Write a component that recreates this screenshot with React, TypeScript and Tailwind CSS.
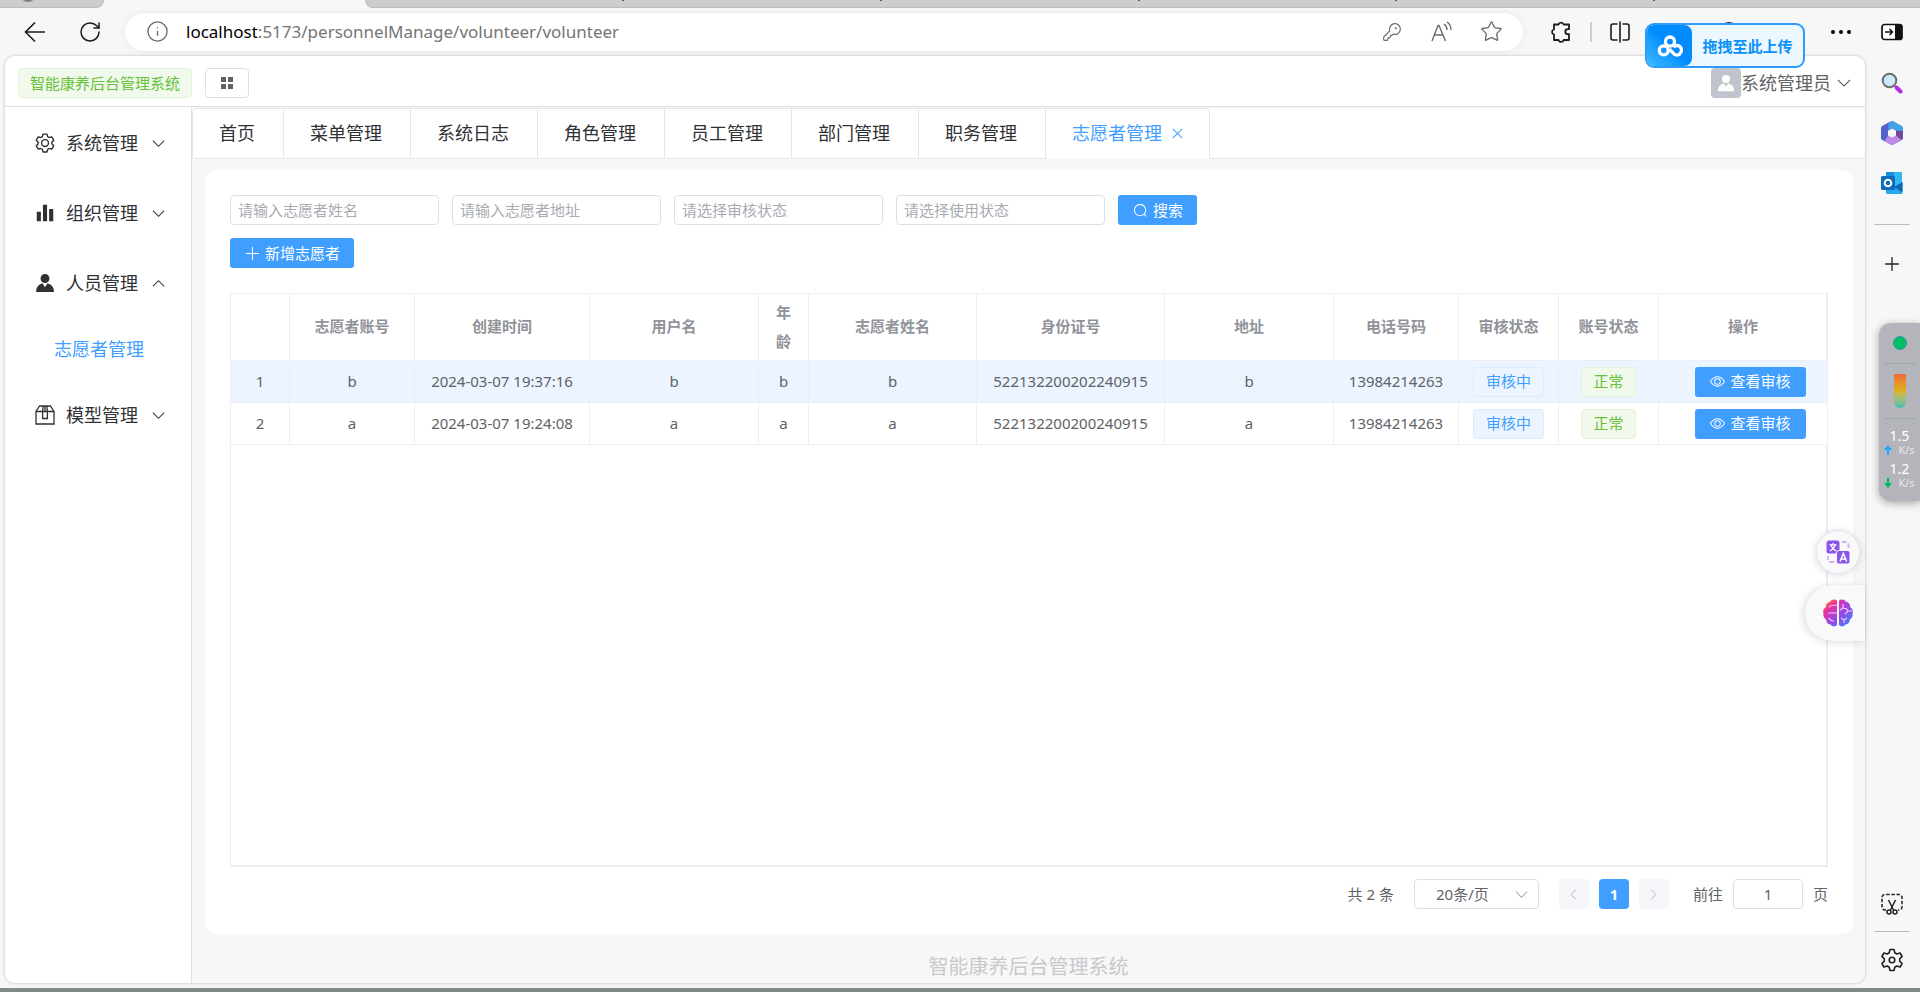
import React from "react";
import { Info, KeyRound, Star, Plus, RotateCw } from "lucide-react";

const CJK = "font-['Noto_Sans','Noto_Sans_CJK_SC',sans-serif]";

function ElIcon({ d, className }: { d: string; className: string }) {
  return (
    <svg viewBox="0 0 1024 1024" fill="currentColor" className={className} aria-hidden="true">
      <path d={d} />
    </svg>
  );
}

const SETTING =
  "M600.704 64a32 32 0 0 1 30.464 22.208l35.2 109.376c14.784 7.232 28.928 15.36 42.432 24.512l112.384-24.192a32 32 0 0 1 34.432 15.36L944.32 364.8a32 32 0 0 1-4.032 37.504l-77.12 85.12a357.12 357.12 0 0 1 0 49.024l77.12 85.248a32 32 0 0 1 4.032 37.504l-88.704 153.6a32 32 0 0 1-34.432 15.296L708.8 803.904c-13.44 9.088-27.648 17.28-42.368 24.512l-35.264 109.376A32 32 0 0 1 600.704 960H423.296a32 32 0 0 1-30.464-22.208L357.696 828.48a351.616 351.616 0 0 1-42.56-24.64l-112.32 24.256a32 32 0 0 1-34.432-15.36L79.68 659.2a32 32 0 0 1 4.032-37.504l77.12-85.248a357.12 357.12 0 0 1 0-48.896l-77.12-85.248A32 32 0 0 1 79.68 364.8l88.704-153.6a32 32 0 0 1 34.432-15.296l112.32 24.256c13.568-9.152 27.776-17.408 42.56-24.64l35.2-109.312A32 32 0 0 1 423.232 64H600.64zm-23.424 64H446.72l-36.352 113.088-24.512 11.968a294.113 294.113 0 0 0-34.816 20.096l-22.656 15.36-116.224-25.088-65.28 113.152 79.68 88.192-1.92 27.136a293.12 293.12 0 0 0 0 40.192l1.92 27.136-79.808 88.192 65.344 113.152 116.224-25.024 22.656 15.296a294.113 294.113 0 0 0 34.816 20.096l24.512 11.968L446.72 896h130.688l36.48-113.152 24.448-11.904a288.282 288.282 0 0 0 34.752-20.096l22.592-15.296 116.288 25.024 65.28-113.152-79.744-88.192 1.92-27.136a293.12 293.12 0 0 0 0-40.256l-1.92-27.136 79.808-88.128-65.344-113.152-116.288 24.96-22.592-15.232a287.616 287.616 0 0 0-34.752-20.096l-24.448-11.904L577.344 128zM512 320a192 192 0 1 1 0 384 192 192 0 0 1 0-384zm0 64a128 128 0 1 0 0 256 128 128 0 0 0 0-256z";
const HISTOGRAM = "M416 896V128h192v768H416zm-288 0V448h192v448H128zm576 0V320h192v576H704z";
const AVATAR =
  "M628.736 528.896A416 416 0 0 1 928 928H96a415.872 415.872 0 0 1 299.264-399.104L512 704l116.736-175.104zM720 304a208 208 0 1 1-416 0 208 208 0 0 1 416 0z";
const SEARCH =
  "m795.904 750.72 124.992 124.928a32 32 0 0 1-45.248 45.248L750.656 795.904a416 416 0 1 1 45.248-45.248zM480 832a352 352 0 1 0 0-704 352 352 0 0 0 0 704z";
const VIEW =
  "M512 160c320 0 512 352 512 352S832 864 512 864 0 512 0 512s192-352 512-352zm0 64c-225.28 0-384.128 208.064-436.8 288 52.608 79.872 211.456 288 436.8 288 225.28 0 384.128-208.064 436.8-288-52.608-79.872-211.456-288-436.8-288zm0 64a224 224 0 1 1 0 448 224 224 0 0 1 0-448zm0 64a160.192 160.192 0 0 0-160 160c0 88.192 71.744 160 160 160s160-71.808 160-160-71.744-160-160-160z";

function Line({ points, className }: { points: string; className: string }) {
  return (
    <svg viewBox="0 0 16 16" fill="none" stroke="currentColor" strokeWidth="1.1" className={className} aria-hidden="true">
      <path d={points} />
    </svg>
  );
}
const DOWN = "M2 5l6 6 6-6";
const UP = "M2 11l6-6 6 6";
const LEFT = "M11 2L5 8l6 6";
const RIGHT = "M5 2l6 6-6 6";
const CROSS = "M3 3l10 10M13 3L3 13";
const ADD = "M8 1v14M1 8h14";

function BoxIcon() {
  return (
    <svg viewBox="0 0 20 20" fill="none" stroke="currentColor" strokeWidth="1.3" className="size-5" aria-hidden="true">
      <path d="M1 6.5h18V19H1zM1 6.5L4.5 1h11L19 6.5M8.2 1L7.6 6.5v7h4.8v-7L11.8 1M10 1v5" />
    </svg>
  );
}

function BrowserBar() {
  return (
    <>
      <div className="flex h-2 items-start justify-between" aria-hidden="true">
        <div className="h-full w-[104px] overflow-hidden rounded-br-lg border-r border-b border-[#bdbdbd] bg-[#cdcdcd] pl-5">
          <div className="-mt-[14px] size-4 rounded-full bg-[#8b7f7d]" />
        </div>
        <div className="ml-[261px] flex h-full flex-1 justify-between rounded-bl-lg border-b border-l border-[#bdbdbd] bg-[#cdcdcd] pr-[265px] pl-[256px]">
          <i className="h-px w-0.5 bg-[#555]" />
          <i className="h-px w-0.5 bg-[#555]" />
          <i className="h-px w-0.5 bg-[#555]" />
          <i className="h-px w-0.5 bg-[#555]" />
          <i className="h-px w-0.5 bg-[#555]" />
        </div>
      </div>
      <div className="flex h-[47px] items-center pl-6 text-[#1b1b1b]">
        <button aria-label="后退">
          <svg viewBox="0 0 22 22" fill="none" stroke="currentColor" strokeWidth="1.6" className="size-[22px]">
            <path d="M21 11H1.500M11 1.500L1.500 11l9.500 9.500" />
          </svg>
        </button>
        <button aria-label="刷新" className="ml-8"><RotateCw className="size-6" strokeWidth={1.5} /></button>
        <div className="ml-[23px] flex h-[38px] flex-1 items-center rounded-full bg-white pr-5 pl-[21px] shadow-[0_0_5px_rgba(0,0,0,0.08)]">
          <Info className="size-[23px] text-[#6b6b6b]" strokeWidth={1.4} />
          <a
            href="#address"
            className="block flex-1 pl-[17px] font-['Noto_Sans',sans-serif] text-[17px] leading-6 text-[#757575]"
          >
            <span className="text-black">localhost</span>:5173/personnelManage/volunteer/volunteer
          </a>
          <div className="flex items-center gap-[26px] text-[#6b6b6b]">
            <button aria-label="密码"><KeyRound className="size-5" strokeWidth={1.4} /></button>
            <button aria-label="朗读" className="w-[26px]">
              <svg viewBox="0 0 26 24" fill="none" stroke="currentColor" strokeWidth="1.4" className="h-6 w-[26px]">
                <path d="M4 21L10 5.500h1L17.500 21M6.300 15h9M16 4c2 1.500 3 3.500 3 6M19 2c3 2 4 5 4 8" />
              </svg>
            </button>
            <button aria-label="收藏"><Star className="size-[23px]" strokeWidth={1.4} /></button>
          </div>
        </div>
        <div className="flex w-[397px] items-center">
          <button aria-label="扩展" className="ml-[26px]">
            <svg viewBox="0 0 24 24" fill="none" stroke="currentColor" strokeWidth="1.8" strokeLinejoin="round" className="size-6">
              <path d="M5 4.500h4.500a2.700 2.700 0 0 1 5.200 0H20v4.700h-1.200a2.500 2.500 0 0 0 0 5H20V20h-5.300a2.700 2.700 0 0 1-5.200 0H5v-5.300a2.700 2.700 0 0 1 0-5.200z" />
            </svg>
          </button>
          <span className="ml-[17px] h-5 w-0.5 bg-[#cfcfcf]" />
          <button aria-label="分屏" className="ml-[17px]">
            <svg viewBox="0 0 22 22" fill="none" stroke="currentColor" strokeWidth="1.6" className="size-[22px]">
              <path d="M8.500 3H4a2 2 0 0 0-2 2v12a2 2 0 0 0 2 2h4.500M13.500 3H18a2 2 0 0 1 2 2v12a2 2 0 0 1-2 2h-4.500M11 .5v21" />
            </svg>
          </button>
          <span className="ml-[88px] size-5 rounded-full border-2 border-[#222]" />
          <button aria-label="更多" className="ml-[92px] flex gap-1">
            <i className="size-[4px] rounded-full bg-black" />
            <i className="size-[4px] rounded-full bg-black" />
            <i className="size-[4px] rounded-full bg-black" />
          </button>
          <button aria-label="侧栏" className="mr-[17px] ml-auto">
            <svg viewBox="0 0 22 18" className="h-[18px] w-[22px]">
              <rect x="1" y="1.500" width="20" height="15" rx="2.500" fill="#fff" stroke="#111" strokeWidth="1.700" />
              <path d="M14 1.500h5a2 2 0 0 1 2 2v11a2 2 0 0 1-2 2h-5z" fill="#111" />
              <path d="M4 9h7M8.500 6l3 3-3 3" fill="none" stroke="#111" strokeWidth="1.500" />
            </svg>
          </button>
        </div>
      </div>
    </>
  );
}

function UploadBadge() {
  return (
    <div className="absolute top-[23px] right-[115px] flex h-[45px] w-[160px] items-center overflow-hidden rounded-[9px] border-2 border-[#2c9bfb] bg-[#ecf7ff]">
      <div className="flex h-full w-[45px] items-center justify-center rounded-r-[8px] bg-gradient-to-tr from-[#3bbcff] to-[#008cff] to-50%">
        <svg viewBox="0 0 28 24" fill="none" stroke="#fff" strokeWidth="3.6" className="h-[22px] w-[26px]">
          <circle cx="14" cy="7.200" r="5" />
          <circle cx="7.200" cy="16.700" r="4.900" />
          <path d="M10.500 13.500M25 20.500a4.900 4.900 0 0 1-7.200-.4L13.500 15.500M17.800 13.300a4.900 4.900 0 1 1 7 6.800" />
        </svg>
      </div>
      <span className="flex-1 pt-px text-center text-[15px] font-bold text-[#0a91fb]">拖拽至此上传</span>
    </div>
  );
}

const menus = [
  { label: "系统管理", icon: <ElIcon d={SETTING} className="size-[22px]" />, arrow: DOWN },
  { label: "组织管理", icon: <ElIcon d={HISTOGRAM} className="size-[22px]" />, arrow: DOWN },
  { label: "人员管理", icon: <ElIcon d={AVATAR} className="size-[22px]" />, arrow: UP, child: "志愿者管理" },
  { label: "模型管理", icon: <BoxIcon />, arrow: DOWN },
];

function Sidebar() {
  return (
    <nav className="w-[187px] shrink-0 border-r border-[#dcdfe6] bg-white pt-px text-[18px] text-[#303133]">
      {menus.map((m) => (
        <div key={m.label}>
          <button className="flex h-[70px] w-full items-center pl-[29px]">
            <span className="flex w-[22px] justify-center">{m.icon}</span>
            <span className="ml-[10px]">{m.label}</span>
            <Line points={m.arrow} className="ml-[13px] size-[15px]" />
          </button>
          {m.child && (
            <a href="#volunteer" className="flex h-[62px] items-center pl-[49px] text-[#409eff]">
              {m.child}
            </a>
          )}
        </div>
      ))}
    </nav>
  );
}

const tabs = ["首页", "菜单管理", "系统日志", "角色管理", "员工管理", "部门管理", "职务管理"];

function Tabs() {
  return (
    <div className="mt-px flex h-[51px] bg-white text-[18px] text-[#303133]">
      {tabs.map((t) => (
        <button
          key={t}
          className="border-t border-r border-b border-[#e4e7ed] pr-[28px] pl-[26px] first:rounded-tl first:border-l"
        >
          {t}
        </button>
      ))}
      <div className="flex items-center rounded-tr border-t border-r border-b border-[#e4e7ed] border-b-white pr-[24px] pl-[26px] text-[#409eff]">
        <button>志愿者管理</button>
        <button aria-label="关闭" className="ml-2">
          <Line points={CROSS} className="size-[15px]" />
        </button>
      </div>
      <div className="flex-1 border-b border-[#e4e7ed]" />
    </div>
  );
}

const cols = [
  { label: "", w: "w-[59px]" },
  { label: "志愿者账号", w: "w-[125px]" },
  { label: "创建时间", w: "w-[175px]" },
  { label: "用户名", w: "w-[169px]" },
  { label: "年龄", w: "w-[50px]" },
  { label: "志愿者姓名", w: "w-[168px]" },
  { label: "身份证号", w: "w-[188px]" },
  { label: "地址", w: "w-[169px]" },
  { label: "电话号码", w: "w-[125px]" },
  { label: "审核状态", w: "w-[100px]" },
  { label: "账号状态", w: "w-[100px]" },
  { label: "操作", w: "w-[168px]" },
];

const rows = [
  ["1", "b", "2024-03-07 19:37:16", "b", "b", "b", "522132200202240915", "b", "13984214263"],
  ["2", "a", "2024-03-07 19:24:08", "a", "a", "a", "522132200200240915", "a", "13984214263"],
];

const field =
  "h-[30px] w-[209px] appearance-none rounded border border-[#dcdfe6] bg-white px-[7px] text-[15px] text-[#a8abb2] outline-none placeholder:text-[#a8abb2]";

function VolunteerCard() {
  return (
    <section className="mr-3 ml-[13px] mt-[11px] flex flex-1 flex-col rounded-[12px] bg-white px-[25px] pt-[25px] pb-[25px] text-[15px]">
      <form className="flex flex-wrap gap-[13px]" onSubmit={(e) => e.preventDefault()}>
        <input aria-label="志愿者姓名" placeholder="请输入志愿者姓名" className={field} />
        <input aria-label="志愿者地址" placeholder="请输入志愿者地址" className={field} />
        <select aria-label="审核状态" className={field}>
          <option>请选择审核状态</option>
        </select>
        <select aria-label="使用状态" className={field}>
          <option>请选择使用状态</option>
        </select>
        <button className="flex h-[30px] items-center gap-[5px] rounded-[3px] bg-[#409eff] pr-[14px] pl-[15px] text-white">
          <ElIcon d={SEARCH} className="size-[15px]" />
          搜索
        </button>
      </form>
      <div className="mt-[13px]">
        <button className="flex h-[30px] items-center gap-[5px] rounded-[3px] bg-[#409eff] pr-[14px] pl-[15px] text-white">
          <Line points={ADD} className="size-[15px]" />
          新增志愿者
        </button>
      </div>
      <div className="mt-[25px] flex-1 border-t border-r-2 border-b-2 border-l border-[#ebeef5]">
        <table className="w-full table-fixed border-separate border-spacing-0 text-center">
          <thead>
            <tr>
              {cols.map((c) => (
                <th
                  key={c.label}
                  className={`${c.w} h-[67px] border-r border-b border-[#ebeef5] px-[12px] pt-0 pb-px leading-[29px] font-bold text-[#909399] last:border-r-0`}
                >
                  {c.label}
                </th>
              ))}
            </tr>
          </thead>
          <tbody className="text-[#606266]">
            {rows.map((r, i) => (
              <tr key={r[0]} className={i === 0 ? "bg-[#ecf5ff]" : "bg-white"}>
                {r.map((v, j) => (
                  <td key={j} className="h-[42px] border-r border-b border-[#ebeef5] p-0">
                    {v}
                  </td>
                ))}
                <td className="h-[42px] border-r border-b border-[#ebeef5] p-0">
                  <span className="inline-flex h-[30px] items-center rounded border border-[#d9ecff] bg-[#ecf5ff] px-[12px] align-middle text-[#409eff]">
                    审核中
                  </span>
                </td>
                <td className="h-[42px] border-r border-b border-[#ebeef5] p-0">
                  <span className="inline-flex h-[30px] items-center rounded border border-[#e1f3d8] bg-[#f0f9eb] px-[11px] align-middle text-[#67c23a]">
                    正常
                  </span>
                </td>
                <td className="h-[42px] border-b border-[#ebeef5] py-0 pr-0 pl-[15px]">
                  <button className="inline-flex h-[30px] items-center gap-[5px] rounded-[3px] bg-[#409eff] px-[15px] align-middle text-white">
                    <ElIcon d={VIEW} className="size-[15px]" />
                    查看审核
                  </button>
                </td>
              </tr>
            ))}
          </tbody>
        </table>
      </div>
      <div className="mt-[12px] flex h-[30px] items-center justify-end text-[#606266]">
        <span>共 2 条</span>
        <div className="relative ml-5">
          <select
            aria-label="每页条数"
            className="h-[30px] w-[125px] appearance-none rounded border border-[#dcdfe6] bg-white pl-[21px] outline-none"
          >
            <option>20条/页</option>
          </select>
          <Line points={DOWN} className="pointer-events-none absolute top-2 right-2.5 size-[15px] text-[#a8abb2]" />
        </div>
        <div className="ml-5 flex gap-[10px]">
          <button aria-label="上一页" className="flex size-[30px] items-center justify-center rounded-sm bg-[#f5f7fa] text-[#a8abb2]">
            <Line points={LEFT} className="size-[13px]" />
          </button>
          <button className="size-[30px] rounded-sm bg-[#409eff] font-bold text-white">1</button>
          <button aria-label="下一页" className="flex size-[30px] items-center justify-center rounded-sm bg-[#f5f7fa] text-[#a8abb2]">
            <Line points={RIGHT} className="size-[13px]" />
          </button>
        </div>
        <label className="ml-6 flex items-center">
          前往
          <input
            defaultValue="1"
            className="mx-[10px] h-[30px] w-[70px] rounded border border-[#dcdfe6] bg-white text-center outline-none"
          />
          页
        </label>
      </div>
    </section>
  );
}

function AppFrame() {
  return (
    <div className="mb-1 ml-1 flex flex-1 flex-col overflow-hidden rounded-[11px] border border-[#dedede] bg-white shadow-[0_0_3px_rgba(0,0,0,0.1)]">
      <header className="flex h-[51px] items-center border-b border-[#dcdfe6] pt-1 pr-[13px] pl-[13px]">
        <h1 className="flex h-[30px] items-center rounded border border-[#e1f3d8] bg-[#f0f9eb] px-[11px] text-[15px] text-[#67c23a]">
          智能康养后台管理系统
        </h1>
        <button aria-label="菜单" className="ml-[13px] flex h-[30px] w-11 items-center justify-center rounded border border-[#dcdfe6] text-[#606266]">
          <svg viewBox="0 0 12 12" fill="currentColor" className="size-3">
            <rect width="5" height="5" />
            <rect x="7" width="5" height="5" />
            <rect y="7" width="5" height="5" />
            <rect x="7" y="7" width="5" height="5" />
          </svg>
        </button>
        <button className="ml-auto flex items-center text-[18px] text-[#606266]">
          <span className="flex size-[30px] items-center justify-center rounded bg-[#c0c4cc] text-white">
            <ElIcon d={AVATAR} className="size-5" />
          </span>
          系统管理员
          <Line points={DOWN} className="ml-[5px] size-4" />
        </button>
      </header>
      <div className="flex flex-1">
        <Sidebar />
        <main className="flex min-w-0 flex-1 flex-col bg-[#f7f7f7]">
          <Tabs />
          <VolunteerCard />
          <footer className="flex h-[49px] items-center justify-center pt-4 text-[20px] text-[#c8c9cc]">
            智能康养后台管理系统
          </footer>
        </main>
      </div>
    </div>
  );
}

function Rail() {
  return (
    <aside className="flex w-[54px] shrink-0 flex-col items-center pr-0.5 pb-4 text-[#222]">
      <button aria-label="搜索" className="mt-[17px]">
        <svg viewBox="0 0 22 22" className="size-[22px]">
          <path d="M14 14l2.500 2.500" stroke="#777" strokeWidth="2" />
          <path d="M15.500 15.500l4 4" stroke="#b52be8" strokeWidth="4" strokeLinecap="round" />
          <circle cx="8.500" cy="8.500" r="6.800" fill="#cfe9fb" stroke="#6d7073" strokeWidth="2" />
        </svg>
      </button>
      <button aria-label="Microsoft 365" className="mt-[27px]">
        <svg viewBox="0 0 22 24" className="h-6 w-[22px]">
          <path d="M9.500.6a3 3 0 0 1 3 0L20.500 5A3 3 0 0 1 22 7.600v8.800a3 3 0 0 1-1.500 2.600l-8 4.500a3 3 0 0 1-3 0L1.500 19A3 3 0 0 1 0 16.400V7.600A3 3 0 0 1 1.500 5z" fill="#4c6fd6" />
          <path d="M11 .2c.6 0 1 .1 1.500.4L20.500 5A3 3 0 0 1 22 7.600V14l-7-4.200-4-2.300-3.500 1V3.500z" fill="#3fa3e6" />
          <path d="M22 10v6.400a3 3 0 0 1-1.500 2.600l-5 2.800-.5-7.400V9.800z" fill="#74489c" />
          <path d="M20.500 19l-8 4.500a3 3 0 0 1-3 0L3.500 20 7 14.400l4 2.300 4-2.300z" fill="#c08be8" />
          <path d="M0 12V7.600A3 3 0 0 1 1.500 5L7 2v12.400L3.500 20l-2-1A3 3 0 0 1 0 16.400z" fill="#5663cf" />
          <path d="M11 7.500l4 2.300v4.600l-4 2.300-4-2.300V9.800z" fill="#f7f7f7" />
        </svg>
      </button>
      <button aria-label="Outlook" className="mt-[26px]">
        <svg viewBox="0 0 22 24" className="h-6 w-[22px]">
          <rect x="5" y="1" width="16" height="14" rx="1" fill="#35b8f1" />
          <path d="M5 1h8v7H5z" fill="#1490df" />
          <path d="M5 12l8 4 8.500-5v10.500a1.500 1.500 0 0 1-1.500 1.500H6.500A1.500 1.500 0 0 1 5 21.500z" fill="#28a8ea" />
          <path d="M13 16l8.500-5v10.500z" fill="#1066b5" />
          <rect y="5" width="14" height="14" rx="1.500" fill="#0f6cbd" />
          <circle cx="7" cy="12" r="3.300" fill="none" stroke="#fff" strokeWidth="2" />
        </svg>
      </button>
      <hr className="mt-[29px] w-9 border-[#bdbdbd]" />
      <button aria-label="添加" className="mt-7">
        <Plus className="size-[22px]" strokeWidth={1.4} />
      </button>
      <button aria-label="截图" className="mt-auto">
        <svg viewBox="0 0 22 22" fill="none" stroke="currentColor" strokeWidth="1.500" className="size-[22px]">
          <path d="M5 17H4a3 3 0 0 1-3-3V4.500a3 3 0 0 1 3-3h14a3 3 0 0 1 3 3V14a3 3 0 0 1-3 3h-1" strokeDasharray="3.500 1.700" />
          <path d="M7.500 7l5 10M14.500 7l-5 10" />
          <circle cx="8" cy="19" r="2" />
          <circle cx="14" cy="19" r="2" />
        </svg>
      </button>
      <hr className="mt-[16px] w-9 border-[#bdbdbd]" />
      <button aria-label="设置" className="mt-[16px]">
        <svg viewBox="0 0 24 24" fill="none" stroke="currentColor" strokeWidth="1.6" strokeLinejoin="round" className="size-6">
          <path d="M10 1.500h4l.8 3.300 2 1.200 3.300-1 2 3.500-2.400 2.300v2.400l2.400 2.300-2 3.500-3.300-1-2 1.200-.8 3.300h-4l-.8-3.300-2-1.200-3.300 1-2-3.500 2.400-2.300v-2.400L1.900 8.500l2-3.500 3.300 1 2-1.200z" />
          <circle cx="12" cy="12" r="2.800" />
        </svg>
      </button>
    </aside>
  );
}

function SpeedArrow({ d, className }: { d: string; className: string }) {
  return (
    <svg viewBox="0 0 8 10" fill="currentColor" className={className} aria-hidden="true">
      <path d={d} />
    </svg>
  );
}

function Monitor() {
  return (
    <div className="absolute top-[323px] right-0 flex h-[178px] w-[41px] flex-col items-center rounded-l-[12px] bg-[#b3b5ba] text-white shadow-[0_2px_8px_rgba(0,0,0,0.35)]">
      <span className="mt-[13px] size-[14px] rounded-full border border-[#3c8fb0] bg-[#00bf63]" />
      <span className="mt-[13px] h-px w-8 bg-[#9fa6aa]" />
      <span className="mt-[10px] h-[34px] w-3 rounded-b-full bg-gradient-to-b from-[#ee6a34] via-[#d9b41c] to-[#35c0b4]" />
      <span className="mt-[10px] h-px w-8 bg-[#9fa6aa]" />
      <span className="mt-2 text-[14px] leading-[18px]">1.5</span>
      <span className="-mt-px flex items-center gap-1.5 text-[11px] leading-3 text-[#e8e8ea]">
        <SpeedArrow d="M4 0l4 5H5v5H3V5H0z" className="h-2.5 w-2 text-[#1fa8ff]" />
        K/s
      </span>
      <span className="mt-1 text-[14px] leading-[18px]">1.2</span>
      <span className="-mt-px flex items-center gap-1.5 text-[11px] leading-3 text-[#e8e8ea]">
        <SpeedArrow d="M4 10l4-5H5V0H3v5H0z" className="h-2.5 w-2 text-[#00b860]" />
        K/s
      </span>
    </div>
  );
}

function FloatingTools() {
  return (
    <>
      <button aria-label="翻译" className="absolute top-[530px] right-[60px] flex size-11 items-center justify-center rounded-full border border-[#e6e6f0] bg-[#f9f9fb] shadow-[0_1px_8px_rgba(0,0,0,0.14)]">
        <svg viewBox="0 0 24 24" className="size-6">
          <rect x=".5" y=".5" width="13" height="13" rx="2.500" fill="#8a55ea" />
          <path d="M3.500 4.800h7M7 3v1.800M4 10.800c3-1.500 4.500-3.500 5-6M10.200 10.800c-3-1.500-4.500-3.500-5-6" fill="none" stroke="#fff" strokeWidth="1.300" />
          <rect x="10.500" y="10.500" width="13.500" height="13.500" rx="2.500" fill="#8a55ea" stroke="#f9f9fb" />
          <path d="M14 21.500l3.300-8 3.300 8M15.200 19h4.200" fill="none" stroke="#fff" strokeWidth="1.500" />
          <path d="M16 2h3.500a3 3 0 0 1 3 3v3M8 22H5a3 3 0 0 1-3-3v-3" fill="none" stroke="#c9b3f3" strokeWidth="1.800" strokeDasharray="5 1.500" />
        </svg>
      </button>
      <button aria-label="AI 助手" className="absolute top-[585px] right-[55px] flex h-14 w-[60px] items-center justify-center rounded-l-full bg-[#f9f9f9] pl-1.5 shadow-[-2px_1px_8px_rgba(0,0,0,0.14)]">
        <svg viewBox="0 0 30 28" className="h-7 w-[30px]">
          <defs>
            <linearGradient id="brain" x1="0" y1="0" x2="1" y2="1">
              <stop offset="0" stopColor="#ffb000" />
              <stop offset=".25" stopColor="#f0309c" />
              <stop offset=".55" stopColor="#9a45e8" />
              <stop offset="1" stopColor="#2b8cff" />
            </linearGradient>
          </defs>
          <path
            d="M14 2v24c-1.500 2-5 2-6.500-.5C4.500 25 3 23 3.200 20.500.8 19 0 17 .5 14.500-.3 12 .5 9.500 2.800 8.300 2.500 5.500 4.500 3 7 2.800 8.500.2 12.500-.3 14 2zM16 2c1.500-2.300 5.500-1.800 7 .8 2.500.2 4.500 2.700 4.200 5.500 2.300 1.200 3.100 3.700 2.300 6.200.5 2.500-.3 4.500-2.700 6 .2 2.500-1.300 4.500-4.300 5C21 28 17.500 28 16 26z"
            fill="url(#brain)"
          />
          <path
            d="M5 14h9M6 8.500c1.500-2.500 4-2.500 8-2.500M6 19c1.500 3 4 3 5 3M20 5v4l-3 2M20 9l4 1M29 12h-4l-3 3M25 12l-2-3M18 19l3 2v3M21 21l3-2"
            fill="none"
            stroke="#f3c6ff"
            strokeWidth="1.200"
          />
        </svg>
      </button>
    </>
  );
}

export default function App() {
  return (
    <div className={`relative flex min-h-screen flex-col bg-[#f7f7f7] ${CJK}`}>
      <BrowserBar />
      <div className="flex flex-1">
        <AppFrame />
        <Rail />
      </div>
      <div className="h-1 bg-[#7d8c87]" />
      <UploadBadge />
      <Monitor />
      <FloatingTools />
    </div>
  );
}
